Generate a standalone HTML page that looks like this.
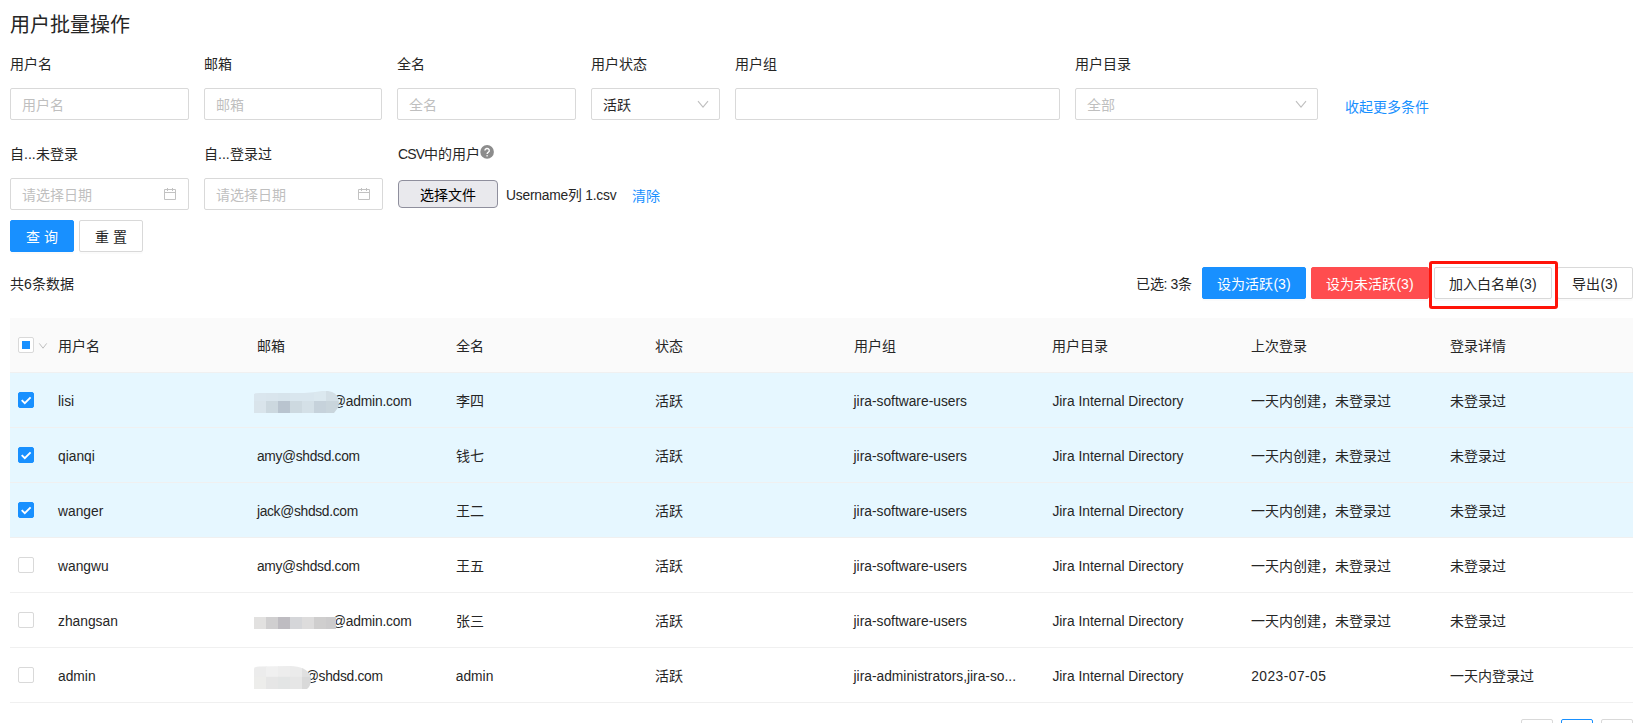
<!DOCTYPE html>
<html lang="zh-CN">
<head>
<meta charset="utf-8">
<title>用户批量操作</title>
<style>
*{box-sizing:border-box;margin:0;padding:0}
html,body{width:1645px;height:723px;overflow:hidden;background:#fff}
body{position:relative;font-family:"Liberation Sans",sans-serif;font-size:14px;color:#262626;line-height:22px}
.abs{position:absolute;white-space:nowrap}
h1.title{position:absolute;left:10px;top:10px;font-size:20px;line-height:30px;font-weight:normal;color:#262626;white-space:nowrap}
.lbl{position:absolute;height:22px;line-height:22px;white-space:nowrap;color:#262626}
.inp{position:absolute;height:32px;border:1px solid #d9d9d9;border-radius:2px;background:#fff;line-height:32px;padding-left:11px;color:#bfbfbf;white-space:nowrap;overflow:hidden}
.inp.val{color:#262626}
.inp svg{position:absolute}
.btn{position:absolute;height:32px;line-height:32px;border:1px solid #d9d9d9;border-radius:2px;background:#fff;text-align:center;white-space:nowrap;color:#262626;box-shadow:0 2px 0 rgba(0,0,0,.016);overflow:hidden}
.btn.pri{background:#1890ff;border-color:#1890ff;color:#fff}
.btn.dan{background:#ff4d4f;border-color:#ff4d4f;color:#fff}
a.lnk{color:#1890ff;text-decoration:none}

table.tb{position:absolute;left:10px;top:318px;width:1623px;border-collapse:separate;border-spacing:0;table-layout:fixed}
table.tb th,table.tb td{height:55px;padding:2px 0 0 16px;text-align:left;font-weight:normal;white-space:nowrap;overflow:hidden;text-overflow:ellipsis;border-bottom:1px solid #f0f0f0;vertical-align:middle;color:#262626;position:relative}
table.tb th{background:#fafafa}
table.tb tr.sel td{background:#e6f7ff}
table.tb th.c0,table.tb td.c0{padding:0}
.cb{position:absolute;left:8px;top:19px;width:16px;height:16px;border:1px solid #d9d9d9;border-radius:2px;background:#fff}
.cb.on{background:#1890ff;border-color:#1890ff}
.cb.on svg{position:absolute;left:-1px;top:-1px}
.cb.ind i{position:absolute;left:3px;top:3px;width:8px;height:8px;background:#1890ff}
.blur{position:absolute;left:13px;display:block;z-index:1}
table.tb td.la{font-size:13.8px;padding-top:4px}
table.tb td.em{font-size:13.8px;letter-spacing:-.3px;padding-top:4px}
table.tb td.dt{font-size:13.8px;letter-spacing:.45px;padding-top:4px}
.pg{position:absolute;top:719px;width:32px;height:32px;border:1px solid #d9d9d9;border-radius:2px;background:#fff}
</style>
</head>
<body>
<h1 class="title">用户批量操作</h1>

<!-- filter row 1 -->
<label class="lbl" style="left:10px;top:53px">用户名</label>
<label class="lbl" style="left:204px;top:53px">邮箱</label>
<label class="lbl" style="left:397px;top:53px">全名</label>
<label class="lbl" style="left:591px;top:53px">用户状态</label>
<label class="lbl" style="left:735px;top:53px">用户组</label>
<label class="lbl" style="left:1075px;top:53px">用户目录</label>

<div class="inp" style="left:10px;top:88px;width:179px">用户名</div>
<div class="inp" style="left:204px;top:88px;width:178px">邮箱</div>
<div class="inp" style="left:397px;top:88px;width:179px">全名</div>
<div class="inp val" style="left:591px;top:88px;width:129px">活跃
  <svg style="left:105px;top:10px" width="12" height="12" viewBox="0 0 12 12"><path d="M1 2.2 L6 8.2 L11 2.2" fill="none" stroke="#bfbfbf" stroke-width="1.1"/></svg>
</div>
<div class="inp" style="left:735px;top:88px;width:325px"></div>
<div class="inp" style="left:1075px;top:88px;width:243px">全部
  <svg style="left:219px;top:10px" width="12" height="12" viewBox="0 0 12 12"><path d="M1 2.2 L6 8.2 L11 2.2" fill="none" stroke="#bfbfbf" stroke-width="1.1"/></svg>
</div>
<a class="lnk abs" style="left:1345px;top:96px">收起更多条件</a>

<!-- filter row 2 -->
<label class="lbl" style="left:10px;top:143px">自...未登录</label>
<label class="lbl" style="left:204px;top:143px">自...登录过</label>
<label class="lbl" style="left:398px;top:143px"><span style="letter-spacing:-.8px">CSV</span>中的用户</label>
<svg class="abs" style="left:480px;top:145px" width="14" height="14" viewBox="0 0 14 14"><circle cx="7.1" cy="6.9" r="6.8" fill="#8c8c8c"/><path d="M4.9 5.6a2.2 2.1 0 1 1 3.3 1.8c-.8.5-1.1.9-1.1 1.7" fill="none" stroke="#fff" stroke-width="1.35"/><rect x="6.4" y="10" width="1.4" height="1.5" fill="#fff" fill-opacity=".85"/></svg>

<div class="inp" style="left:10px;top:178px;width:179px">请选择日期<svg style="left:153px;top:8px" width="12" height="13" viewBox="0 0 12 13"><path d="M.5 2.5h11v10H.5zM0 5.5h12M3.5 1v3M8.5 1v3" fill="none" stroke="#c2c2c2" stroke-width="1"/></svg></div>
<div class="inp" style="left:204px;top:178px;width:179px">请选择日期<svg style="left:153px;top:8px" width="12" height="13" viewBox="0 0 12 13"><path d="M.5 2.5h11v10H.5zM0 5.5h12M3.5 1v3M8.5 1v3" fill="none" stroke="#c2c2c2" stroke-width="1"/></svg></div>

<div class="abs filebtn" style="left:398px;top:180px;width:100px;height:28px;line-height:28px;border:1px solid #8f8f9d;border-radius:4px;background:#e9e9ed;text-align:center;color:#000">选择文件</div>
<span class="abs" style="left:506px;top:185px;font-size:13.8px;letter-spacing:-.22px">Username列 1.csv</span>
<a class="lnk abs" style="left:632px;top:185px">清除</a>

<div class="btn pri" style="left:10px;top:220px;width:64px">查 询</div>
<div class="btn" style="left:79px;top:220px;width:64px">重 置</div>

<!-- toolbar -->
<span class="abs" style="left:10px;top:273px">共6条数据</span>
<span class="abs" style="left:1136px;top:273px;letter-spacing:-.3px">已选: 3条</span>
<div class="btn pri" style="left:1202px;top:267px;width:104px">设为活跃(3)</div>
<div class="btn dan" style="left:1311px;top:267px;width:118px">设为未活跃(3)</div>
<div class="btn" style="left:1434px;top:267px;width:118px">加入白名单(3)</div>
<div class="btn" style="left:1557px;top:267px;width:76px">导出(3)</div>
<div class="abs" style="left:1429px;top:261px;width:129px;height:48px;border:3px solid #ff1409;border-radius:3px"></div>

<!-- table -->
<table class="tb">
<colgroup><col style="width:32px"><col style="width:198.875px"><col style="width:198.875px"><col style="width:198.875px"><col style="width:198.875px"><col style="width:198.875px"><col style="width:198.875px"><col style="width:198.875px"><col style="width:198.875px"></colgroup>
<thead><tr>
<th class="c0"><span class="cb ind"><i></i></span></th>
<th>用户名</th>
<th>邮箱</th>
<th>全名</th>
<th>状态</th>
<th>用户组</th>
<th>用户目录</th>
<th>上次登录</th>
<th>登录详情</th>
</tr></thead><tbody>
<tr class="sel">
<td class="c0"><span class="cb on"><svg width="16" height="16" viewBox="0 0 16 16"><path d="M3.7 8.1 L6.8 11.2 L12.6 5.4" fill="none" stroke="#fff" stroke-width="1.9"/></svg></span></td><td class="la">lisi</td><td class="em"><svg class="blur" style="top:18px" width="85" height="22" viewBox="0 0 85 22"><defs><clipPath id="k1"><path d="M0 3.2 Q0 2 6 2 L50 2 Q60 1.5 68 0 L74 0 Q83 1 84.5 9 L84.5 16 L80 22 L0 22 Z"/></clipPath></defs><g clip-path="url(#k1)"><rect x="0" y="0" width="13" height="10.2" fill="#dae6ee"/><rect x="12" y="0" width="13" height="10.2" fill="#d9e5ed"/><rect x="24" y="0" width="13" height="10.2" fill="#d7e4ec"/><rect x="36" y="0" width="13" height="10.2" fill="#d9e6ee"/><rect x="48" y="0" width="13" height="10.2" fill="#d9e6ee"/><rect x="60" y="0" width="13" height="10.2" fill="#dbe8ef"/><rect x="72" y="0" width="13" height="10.2" fill="#d3dfe6"/><rect x="84" y="0" width="13" height="10.2" fill="#d3dfe6"/><rect x="0" y="10" width="13" height="12" fill="#d9e4eb"/><rect x="12" y="10" width="13" height="12" fill="#ccd8df"/><rect x="24" y="10" width="13" height="12" fill="#b9c4cf"/><rect x="36" y="10" width="13" height="12" fill="#cdd9e0"/><rect x="48" y="10" width="13" height="12" fill="#d4e0e7"/><rect x="60" y="10" width="13" height="12" fill="#c6d2db"/><rect x="72" y="10" width="13" height="12" fill="#c9d5dc"/><rect x="84" y="10" width="13" height="12" fill="#c9d5dc"/></g></svg><span style="display:inline-block;width:75px"></span><span style="letter-spacing:-.18px">@admin.com</span></td><td>李四</td><td>活跃</td><td class="la">jira-software-users</td><td class="la">Jira Internal Directory</td><td>一天内创建，未登录过</td><td>未登录过</td></tr>
<tr class="sel">
<td class="c0"><span class="cb on"><svg width="16" height="16" viewBox="0 0 16 16"><path d="M3.7 8.1 L6.8 11.2 L12.6 5.4" fill="none" stroke="#fff" stroke-width="1.9"/></svg></span></td><td class="la">qianqi</td><td class="em">amy@shdsd.com</td><td>钱七</td><td>活跃</td><td class="la">jira-software-users</td><td class="la">Jira Internal Directory</td><td>一天内创建，未登录过</td><td>未登录过</td></tr>
<tr class="sel">
<td class="c0"><span class="cb on"><svg width="16" height="16" viewBox="0 0 16 16"><path d="M3.7 8.1 L6.8 11.2 L12.6 5.4" fill="none" stroke="#fff" stroke-width="1.9"/></svg></span></td><td class="la">wanger</td><td class="em">jack@shdsd.com</td><td>王二</td><td>活跃</td><td class="la">jira-software-users</td><td class="la">Jira Internal Directory</td><td>一天内创建，未登录过</td><td>未登录过</td></tr>
<tr>
<td class="c0"><span class="cb"></span></td><td class="la">wangwu</td><td class="em">amy@shdsd.com</td><td>王五</td><td>活跃</td><td class="la">jira-software-users</td><td class="la">Jira Internal Directory</td><td>一天内创建，未登录过</td><td>未登录过</td></tr>
<tr>
<td class="c0"><span class="cb"></span></td><td class="la">zhangsan</td><td class="em"><svg class="blur" style="top:24px" width="83" height="12" viewBox="0 0 83 12"><defs><clipPath id="k2"><path d="M0 0 H82 V12 H0 Z"/></clipPath></defs><g clip-path="url(#k2)"><rect x="0" y="0" width="13" height="12" fill="#e2e1e0"/><rect x="12" y="0" width="13" height="12" fill="#d0cfd0"/><rect x="24" y="0" width="13" height="12" fill="#bebcc1"/><rect x="36" y="0" width="13" height="12" fill="#d5d6d9"/><rect x="48" y="0" width="13" height="12" fill="#dddcdc"/><rect x="60" y="0" width="13" height="12" fill="#cfcece"/><rect x="72" y="0" width="13" height="12" fill="#cccbcc"/></g></svg><span style="display:inline-block;width:75px"></span><span style="letter-spacing:-.18px">@admin.com</span></td><td>张三</td><td>活跃</td><td class="la">jira-software-users</td><td class="la">Jira Internal Directory</td><td>一天内创建，未登录过</td><td>未登录过</td></tr>
<tr>
<td class="c0"><span class="cb"></span></td><td class="la">admin</td><td class="em"><svg class="blur" style="top:18px" width="58" height="23" viewBox="0 0 58 23"><defs><clipPath id="k3"><path d="M0 3 Q0 .6 5 .4 L36 0 Q52 .5 56 9 L57 15 Q56.5 20 53 23 L0 23 Z"/></clipPath></defs><g clip-path="url(#k3)"><rect x="0" y="0" width="13" height="11" fill="#ececec"/><rect x="12" y="0" width="13" height="11" fill="#f0f0f0"/><rect x="24" y="0" width="13" height="11" fill="#ededed"/><rect x="36" y="0" width="13" height="11" fill="#ebebeb"/><rect x="48" y="0" width="13" height="11" fill="#e0e0e0"/><rect x="0" y="10.8" width="13" height="13" fill="#ededeb"/><rect x="12" y="10.8" width="13" height="13" fill="#e6e6e6"/><rect x="24" y="10.8" width="13" height="13" fill="#e3e5e5"/><rect x="36" y="10.8" width="13" height="13" fill="#e6e6e6"/><rect x="48" y="10.8" width="13" height="13" fill="#d9d9d9"/></g></svg><span style="display:inline-block;width:48px"></span>@shdsd.com</td><td class="la">admin</td><td>活跃</td><td class="la">jira-administrators,jira-so...</td><td class="la">Jira Internal Directory</td><td class="dt">2023-07-05</td><td>一天内登录过</td></tr>
</tbody></table>
<svg class="abs" style="left:38px;top:341px" width="10" height="10" viewBox="0 0 10 10"><path d="M1.3 2.4 L5 7.2 L8.7 2.4" fill="none" stroke="#bfbfbf" stroke-width="1"/></svg>
<div class="pg" style="left:1521px"></div><div class="pg" style="left:1561px;border-color:#1890ff"></div><div class="pg" style="left:1601px"></div>
</body>
</html>
